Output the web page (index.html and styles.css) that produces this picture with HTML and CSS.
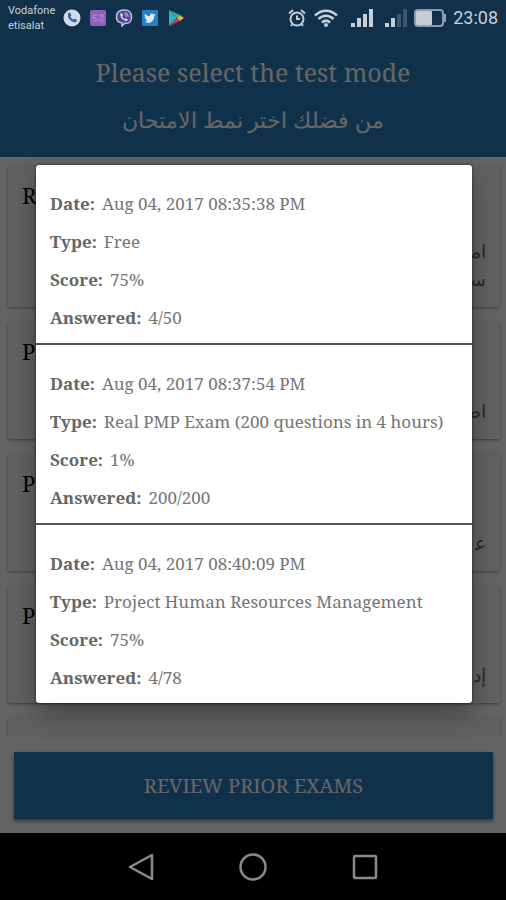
FILE: index.html
```html
<!DOCTYPE html>
<html lang="en">
    <head>
        <title>Prior exams</title>
        <meta charset="UTF-8" />
        <meta name="viewport" content="width=device-width, initial-scale=1" />
        <link rel="stylesheet" href="styles.css">
    </head>

    <body>
        <div class="screen">
            <div class="statusbar">
                <div class="carrier">Vodafone<br />etisalat</div>
                <div class="notifications">
                    <svg width="18" height="18" viewBox="0 0 18 18">
                        <circle cx="9" cy="9" r="8.5" fill="#d3dce6" />
                        <path d="M5.2 4.2l1.7-.6 1.6 2.6-1.1 1.2c.6 1.4 1.6 2.4 3 3l1.3-1 2.4 1.7-.8 1.9c-4.6 1.2-9.6-4.2-8.1-8.8z" fill="#2a67a8" />
                    </svg>
                    <svg width="18" height="18" viewBox="0 0 18 18">
                        <rect x="1" y="1" width="16" height="16" rx="2" fill="#8d62b8" />
                        <path d="M4 6h4M4 6v3h3v3H4M14 6l-5 6M10 6h4v2M11 12h3v-2" fill="none" stroke="#b893d2" />
                    </svg>
                    <svg width="18" height="18" viewBox="0 0 18 18">
                        <path d="M9 1c5.5 0 7.5 2 7.5 7.2S14 14.500 9.500 14.500L7 17v-3C3 13.500 1.500 12 1.500 8S3.500 1 9 1z" fill="#51468f" stroke="#c2bfdf" stroke-width="1.5" />
                        <path d="M5.3 4.500l1.5-.3 1.2 2-.8 1.2c.5 1.300 1.200 2 2.500 2.600l1.200-.8 1.900 1.300-.8 1.400C8.500 12 4.800 8.500 5.300 4.500z" fill="#e0def0" />
                        <path d="M9.500 4c2.300.2 3.500 1.500 3.600 3.800M9.700 6c1 .1 1.500.7 1.500 1.600" fill="none" stroke="#e0def0" />
                    </svg>
                    <svg width="18" height="18" viewBox="0 0 18 18">
                        <rect x="1" y="1" width="16" height="16" rx="1" fill="#2581c4" />
                        <path d="M14.500 5.600l-1.300.4 1-1.300-1.500.6c-1.700-1.700-4.200-.4-3.800 1.900-2 0-3.700-1-5-2.500-.7 1.300-.3 2.500.8 3.300l-1-.3c0 1.200.7 2.100 2 2.500h-1c.4 1 1.100 1.500 2.200 1.600-1 .8-2.100 1.100-3.400 1 4.300 2.500 9.900-.1 9.700-5.900z" fill="#e0eaf2" />
                    </svg>
                    <svg width="18" height="18" viewBox="0 0 18 18">
                        <path d="M2 1v16l8-8z" fill="#26b3c3" />
                        <path d="M2 1l8 8 3-3z" fill="#31b684" />
                        <path d="M2 17l8-8 3 3z" fill="#c93a58" />
                        <path d="M13 6l4 3-4 3-3-3z" fill="#dfb43c" />
                    </svg>
                </div>
                <div class="indicators">
                    <svg width="20" height="20" viewBox="0 0 20 20" fill="none" stroke="#c5cfd9" stroke-width="2">
                        <circle cx="10" cy="11" r="6.5" />
                        <path d="M10 7.500V11h3M2 5.500l4-3.500M18 5.500l-4-3.500M5.500 16L4 18M14.500 16l1.500 2" />
                    </svg>
                    <svg width="26" height="20" viewBox="0 0 26 20" fill="none" stroke="#c5cfd9" stroke-width="2.5">
                        <path d="M2 7.500c6.500-6.500 15.500-6.500 22 0M5.500 11c4.500-4.500 10.500-4.500 15 0M9 14.500c2.500-2.500 5.500-2.500 8 0" />
                        <circle cx="13" cy="17" r="2" fill="#c5cfd9" stroke="none" />
                    </svg>
                    <svg class="signal" width="22" height="20" viewBox="0 0 22 20" fill="#c5cfd9">
                        <rect x="0" y="15" width="4" height="4" />
                        <rect x="6" y="10" width="4" height="9" />
                        <rect x="12" y="6" width="4" height="13" />
                        <rect x="18" y="1" width="4" height="18" />
                    </svg>
                    <svg class="signal" width="22" height="20" viewBox="0 0 22 20" fill="#c5cfd9">
                        <rect x="0" y="15" width="4" height="4" />
                        <rect x="6" y="10" width="4" height="9" />
                        <rect x="12" y="6" width="4" height="13" fill="#3d566a" />
                        <rect x="18" y="1" width="4" height="18" fill="#3d566a" />
                    </svg>
                    <svg width="34" height="20" viewBox="0 0 34 20">
                        <rect x="2" y="2" width="28" height="16" rx="3" fill="none" stroke="#8c9cab" stroke-width="2" />
                        <rect x="3" y="3" width="16" height="14" rx="1" fill="#c5cdd7" />
                        <rect x="31" y="6" width="2" height="8" fill="#8c9cab" />
                    </svg>
                    <span class="clock">23:08</span>
                </div>
            </div>

            <main class="app">
                <header class="header">
                    <h1>Please select the test mode</h1>
                    <p lang="ar" dir="rtl">من فضلك اختر نمط الامتحان</p>
                </header>

                <div class="modes">
                    <section class="card card-tall">
                        <h2>R</h2>
                        <p lang="ar" dir="rtl">ام&zwj;<br />س&zwj;</p>
                    </section>
                    <section class="card">
                        <h2>P</h2>
                        <p lang="ar" dir="rtl">اص&zwj;</p>
                    </section>
                    <section class="card">
                        <h2>P</h2>
                        <p lang="ar" dir="rtl">ع&zwj;</p>
                    </section>
                    <section class="card">
                        <h2>P</h2>
                        <p lang="ar" dir="rtl">إد</p>
                    </section>
                    <section class="card"></section>
                </div>

                <div class="footer">
                    <button class="review">REVIEW PRIOR EXAMS</button>
                </div>

                <div class="scrim">
                    <div class="dialog" role="dialog" aria-label="Prior exams">
                        <dl class="exam">
                            <div><dt>Date:</dt><dd>Aug 04, 2017 08:35:38 PM</dd></div>
                            <div><dt>Type:</dt><dd>Free</dd></div>
                            <div><dt>Score:</dt><dd>75%</dd></div>
                            <div><dt>Answered:</dt><dd>4/50</dd></div>
                        </dl>
                        <dl class="exam">
                            <div><dt>Date:</dt><dd>Aug 04, 2017 08:37:54 PM</dd></div>
                            <div><dt>Type:</dt><dd>Real PMP Exam (200 questions in 4 hours)</dd></div>
                            <div><dt>Score:</dt><dd>1%</dd></div>
                            <div><dt>Answered:</dt><dd>200/200</dd></div>
                        </dl>
                        <dl class="exam">
                            <div><dt>Date:</dt><dd>Aug 04, 2017 08:40:09 PM</dd></div>
                            <div><dt>Type:</dt><dd>Project Human Resources Management</dd></div>
                            <div><dt>Score:</dt><dd>75%</dd></div>
                            <div><dt>Answered:</dt><dd>4/78</dd></div>
                        </dl>
                    </div>
                </div>
            </main>

            <nav class="navbar">
                <button aria-label="Back">
                    <svg width="28" height="28" viewBox="0 0 28 28"><path d="M25 2v24L3 14z" /></svg>
                </button>
                <button aria-label="Home">
                    <svg width="28" height="28" viewBox="0 0 28 28"><circle cx="14" cy="14" r="12.5" /></svg>
                </button>
                <button aria-label="Recent apps">
                    <svg width="28" height="28" viewBox="0 0 28 28"><rect x="3" y="3" width="22" height="22" rx="1" /></svg>
                </button>
            </nav>
        </div>
    </body>
</html>
```

FILE: styles.css
```css
* {
    box-sizing: border-box;
}

body,
h1,
h2,
p,
dl,
dd {
    margin: 0;
}

body {
    font-family: 'Noto Serif', 'DejaVu Serif Condensed', 'DejaVu Serif', serif;
    background: #000;
}

.screen {
    display: flex;
    flex-direction: column;
    height: 100vh;
}

.statusbar {
    display: flex;
    align-items: center;
    height: 35px;
    padding: 0 8px;
    background: #11314a;
    color: #c5cfd9;
    font-family: Roboto, sans-serif;
}

.carrier {
    width: 55px;
    font-size: 11px;
    line-height: 15px;
}

.notifications {
    display: flex;
    gap: 8px;
}

.indicators {
    display: flex;
    align-items: center;
    gap: 6px;
    margin-left: auto;
}

.signal {
    margin-left: 6px;
}

.clock {
    font-size: 18px;
}

.app {
    position: relative;
    display: flex;
    flex: 1;
    flex-direction: column;
    min-height: 0;
    background: #f8f8f8;
}

.header {
    padding: 19px 0 21px;
    background: #2a7ab9;
    color: #fff;
    text-align: center;
}

.header h1 {
    font-size: 25px;
    font-weight: normal;
    line-height: 36px;
}

.header p {
    margin-top: 13px;
    font-size: 22px;
    line-height: 33px;
}

.modes {
    display: flex;
    flex: 1;
    flex-direction: column;
    gap: 15px;
    min-height: 0;
    overflow: hidden;
    padding: 9px 6px 0 8px;
}

.card {
    display: flex;
    flex: none;
    flex-direction: column;
    justify-content: space-between;
    height: 117px;
    padding: 13px 14px 14px;
    border-radius: 2px;
    background: #f0f0f0;
    box-shadow: 0 1px 3px rgba(0, 0, 0, 0.4);
}

.card-tall {
    height: 141px;
}

.card h2 {
    font-size: 22px;
    font-weight: normal;
    line-height: 32px;
}

.card p {
    color: #666;
    font-size: 19px;
    line-height: 28px;
}

.footer {
    padding: 15px 13px 14px 14px;
}

.review {
    width: 100%;
    height: 67px;
    border: 0;
    background: #2a7ab9;
    box-shadow: 0 2px 4px rgba(0, 0, 0, 0.5);
    color: #fff;
    font-family: inherit;
    font-size: 20px;
}

.scrim {
    position: absolute;
    inset: 0;
    display: flex;
    align-items: center;
    padding: 0 34px 0 36px;
    background: rgba(0, 0, 0, 0.6);
}

.dialog {
    width: 100%;
    border-radius: 3px;
    background: #fff;
    box-shadow: 0 12px 24px rgba(0, 0, 0, 0.3), 0 0 3px rgba(0, 0, 0, 0.6);
}

.exam {
    padding: 20px 14px 6px;
    color: #757575;
    font-size: 17px;
}

.exam + .exam {
    border-top: 2px solid #555;
}

.exam div {
    display: flex;
    gap: 7px;
    line-height: 38px;
}

.exam dt {
    color: #666;
    font-weight: bold;
}

.navbar {
    display: flex;
    align-items: center;
    justify-content: center;
    gap: 84px;
    height: 67px;
    background: #000;
}

.navbar button {
    display: flex;
    padding: 0;
    border: 0;
    background: none;
}

.navbar svg {
    fill: none;
    stroke: #8a8a8a;
    stroke-width: 2.5;
    stroke-linejoin: round;
}
```
